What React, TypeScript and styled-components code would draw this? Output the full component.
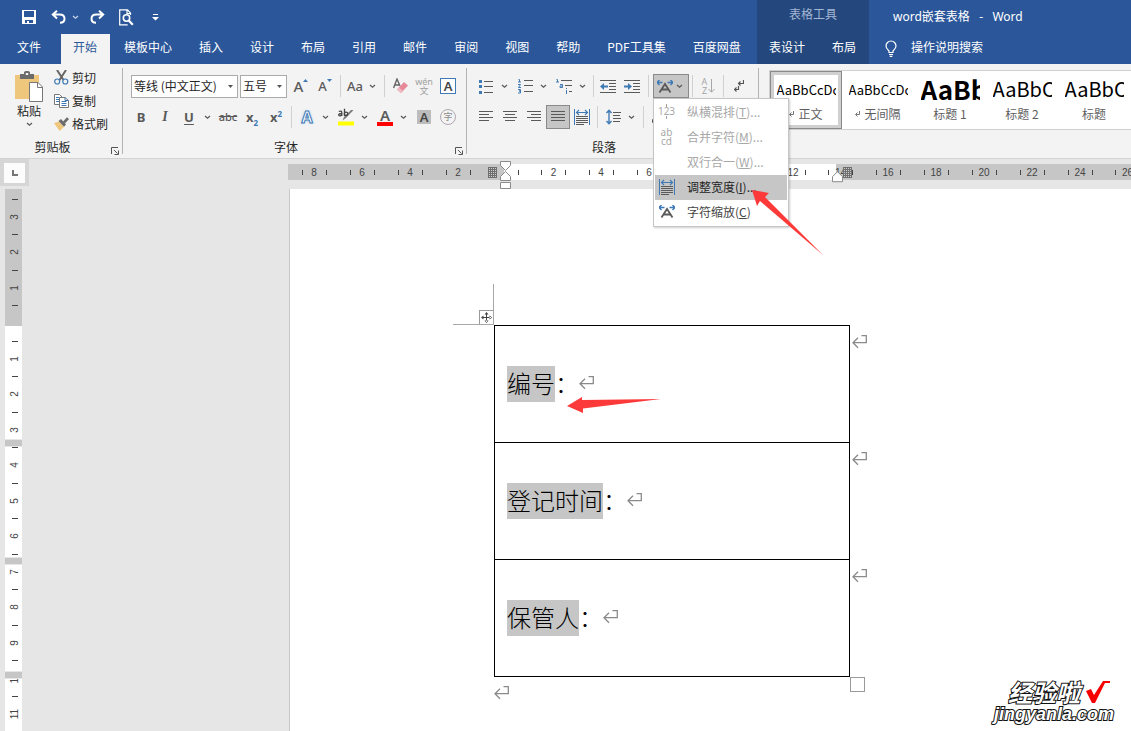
import React from "react";
import styled, { createGlobalStyle, css } from "styled-components";

const ui = `"Noto Sans", "Noto Sans CJK SC", sans-serif`;
const cjk = `"Noto Sans CJK SC", "Noto Sans", sans-serif`;
const blue = "#2b579a";
const accent = "#3f7ab5";
const ink = "#5a5a5a";

const GlobalStyle = createGlobalStyle`
  *, *::before, *::after { box-sizing: border-box; }
  body { margin: 0; font-family: ${cjk}; font-size: 12px; line-height: 16px; color: #262626; }
  button, select { font: inherit; color: inherit; margin: 0; padding: 0; border: 0; background: none; }
  ul { list-style: none; margin: 0; padding: 0; }
  svg { display: block; flex: none; }
`;

const Shell = styled.div`
  position: relative;
  display: flex;
  flex-direction: column;
  height: 100vh;
  overflow: hidden;
  background: #e6e6e6;
`;

/* ---------- title bar and tabs ---------- */

const Header = styled.header`
  display: flex;
  flex: none;
  background: ${blue};
  color: #fff;
`;

const HeaderColumn = styled.div<{ $context?: boolean; $grow?: boolean }>`
  display: flex;
  flex-direction: column;
  flex: ${(p) => (p.$grow ? "1" : "none")};
  min-width: ${(p) => (p.$grow || p.$context ? "0" : "757px")};
  background: ${(p) => (p.$context ? "#24477d" : "transparent")};
`;

const QuickAccess = styled.div`
  display: flex;
  align-items: center;
  gap: 5px;
  height: 34px;
  padding-left: 17px;
`;

const QuickButton = styled.button`
  display: flex;
  align-items: center;
  justify-content: center;
  width: 24px;
  height: 24px;
`;

const QuickSplit = styled.div`
  display: flex;
  align-items: center;
`;

const TinyButton = styled.button`
  display: flex;
  align-items: center;
  justify-content: center;
  width: 10px;
  height: 24px;
`;

const ContextTitle = styled.div`
  height: 34px;
  line-height: 28px;
  text-align: center;
  color: #a3b6d3;
`;

const DocumentTitle = styled.div`
  height: 34px;
  padding-left: 24px;
  line-height: 34px;
  font-family: ${ui};
  white-space: pre;
`;

const Tabs = styled.nav`
  display: flex;
  gap: 2px;
  height: 30px;
`;

const Tab = styled.button<{ $active?: boolean; $file?: boolean }>`
  padding: ${(p) => (p.$file ? "0 18px 0 17px" : "0 13px 0 12px")};
  height: 30px;
  padding-bottom: 4px;
  line-height: 26px;
  white-space: nowrap;
  ${(p) => p.$active && css`background: #f3f3f3; color: ${blue};`}
`;

const TellMe = styled.button`
  display: flex;
  align-items: center;
  gap: 14px;
  height: 28px;
  padding-left: 16px;
  line-height: 28px;
  span { padding-bottom: 2px; line-height: 26px; }
`;

/* ---------- ribbon ---------- */

const Ribbon = styled.section`
  position: relative;
  z-index: 2;
  display: flex;
  flex: none;
  height: 95px;
  background: #f3f3f3;
  border-bottom: 1px solid #d2d2d2;
`;

const Group = styled.div<{ $width: number }>`
  display: flex;
  flex-direction: column;
  flex: none;
  width: ${(p) => p.$width}px;
`;

const GroupDivider = styled.div`
  flex: none;
  width: 1px;
  margin: 4px 0;
  background: #b4b4b4;
`;

const GroupRows = styled.div<{ $left: number }>`
  display: flex;
  flex-direction: column;
  flex: 1;
  gap: 7px;
  padding: 10px 0 0 ${(p) => p.$left}px;
`;

const Row = styled.div<{ $indent?: number }>`
  display: flex;
  align-items: center;
  height: 24px;
  padding-left: ${(p) => p.$indent ?? 0}px;
`;

const GroupFooter = styled.div`
  display: flex;
  align-items: center;
  height: 21px;
  span { flex: 1; padding-bottom: 2px; text-align: center; }
`;

const Launcher = styled.button`
  display: flex;
  align-items: flex-end;
  width: 17px;
  height: 14px;
  padding-left: 6px;
`;

const ClipboardBody = styled.div`
  display: flex;
  flex: 1;
  gap: 8px;
  padding: 3px 0 0 12px;
`;

const PasteButton = styled.button`
  display: flex;
  flex-direction: column;
  align-items: center;
  width: 34px;
  height: 69px;
  padding-top: 4px;
  gap: 2px;
  span { line-height: 14px; padding-bottom: 2px; }
`;

const CommandList = styled.div`
  display: flex;
  flex-direction: column;
`;

const Command = styled.button`
  display: flex;
  align-items: center;
  gap: 3px;
  height: 23px;
  padding-bottom: 2px;
  white-space: nowrap;
`;

const Combo = styled.span<{ $width: number }>`
  position: relative;
  display: block;
  width: ${(p) => p.$width}px;
  height: 23px;
  margin-right: 2px;
  select {
    width: 100%;
    height: 23px;
    padding: 0 0 0 2px;
    border: 1px solid #ababab;
    border-radius: 0;
    background: #fff;
    appearance: none;
    line-height: 16px;
  }
  svg { position: absolute; right: 5px; top: 10px; pointer-events: none; }
`;

const Tool = styled.button<{ $w?: number; $pressed?: boolean; $caret?: boolean }>`
  display: flex;
  align-items: center;
  justify-content: center;
  flex: none;
  width: ${(p) => p.$w ?? 24}px;
  height: 24px;
  padding-right: ${(p) => (p.$caret ? 3 : 0)}px;
  font-family: ${ui};
  color: ${ink};
  ${(p) => p.$pressed && css`background: #c6c6c6; box-shadow: inset 0 0 0 1px #8a8a8a;`}
`;

const PressedCaret = styled.span`
  display: flex;
  justify-content: center;
  width: 13px;
`;

const Sep = styled.i<{ $w?: number }>`
  display: flex;
  justify-content: center;
  width: ${(p) => p.$w ?? 7}px;
  height: 22px;
  &::after { content: ""; width: 1px; background: #d0d0d0; }
`;

const Letter = styled.span<{ $size?: number; $bold?: boolean; $italic?: boolean; $under?: boolean; $strike?: boolean; $serif?: boolean }>`
  font-size: ${(p) => p.$size ?? 13}px;
  line-height: 16px;
  font-family: ${(p) => (p.$serif ? `"Liberation Serif", serif` : ui)};
  font-weight: ${(p) => (p.$bold ? 700 : 500)};
  font-style: ${(p) => (p.$italic ? "italic" : "normal")};
  text-decoration: ${(p) => (p.$under ? "underline" : p.$strike ? "line-through" : "none")};
  text-underline-offset: 2px;
  sub, sup { font-size: 8px; line-height: 0; color: ${accent}; }
`;

const GrowLetter = styled.span<{ $size: number }>`
  display: flex;
  align-items: flex-start;
  font-size: ${(p) => p.$size}px;
  font-weight: 500;
  line-height: 18px;
  svg { margin-top: 2px; }
`;

const ColorLetter = styled.span<{ $bar: string }>`
  display: flex;
  justify-content: center;
  width: 16px;
  height: 18px;
  border-bottom: 4px solid ${(p) => p.$bar};
  font-size: 15px;
  font-weight: 600;
  line-height: 15px;
`;

const OutlineLetter = styled.span`
  font-size: 16px;
  font-weight: 700;
  line-height: 18px;
  color: #fff;
  -webkit-text-stroke: 1px ${accent};
  text-shadow: 0 0 3px #8fb8e0;
`;

const BoxLetter = styled.span<{ $filled?: boolean }>`
  width: ${(p) => (p.$filled ? 14 : 16)}px;
  height: ${(p) => (p.$filled ? 14 : 16)}px;
  border: ${(p) => (p.$filled ? "0" : `1px solid ${accent}`)};
  background: ${(p) => (p.$filled ? "#bcbcbc" : "#fff")};
  color: #444;
  font-size: 13px;
  font-weight: 600;
  line-height: 14px;
  text-align: center;
`;

const CircleLetter = styled.span`
  width: 16px;
  height: 16px;
  border: 1px solid #b0a8b0;
  border-radius: 50%;
  color: #8c8c8c;
  font-size: 9px;
  line-height: 14px;
  text-align: center;
`;

const Phonetic = styled.span`
  display: flex;
  flex-direction: column;
  align-items: center;
  font-size: 9px;
  line-height: 9px;
  color: #a0a0a0;
`;

const SortLetters = styled.span`
  display: flex;
  align-items: center;
  color: #a6a6a6;
  font-size: 9px;
  line-height: 9px;
  span { width: 7px; }
`;

/* ---------- layout menu ---------- */

const MenuAnchor = styled.div`
  position: relative;
  height: 24px;
`;

const Menu = styled.ul`
  position: absolute;
  z-index: 5;
  top: 24px;
  left: 0;
  width: 136px;
  padding: 1px;
  border: 1px solid #c6c6c6;
  background: #fff;
  box-shadow: 1px 1px 2px rgba(0, 0, 0, 0.2);
`;

const MenuItem = styled.button<{ $on?: boolean }>`
  display: flex;
  align-items: center;
  gap: 12px;
  width: 100%;
  height: 25px;
  padding: 0 0 2px 3px;
  text-align: left;
  white-space: nowrap;
  background: ${(p) => (p.$on ? "#c6c6c6" : "transparent")};
  color: ${(p) => (p.disabled ? "#a8a8a8" : p.$on ? "#1e1e1e" : "#444")};
`;

const MenuIcon = styled.span`
  display: flex;
  flex-direction: column;
  align-items: center;
  justify-content: center;
  flex: none;
  width: 17px;
  font-family: ${ui};
  font-size: 10px;
  line-height: 9px;
  text-align: center;
`;

const MenuArrow = styled.svg`
  position: absolute;
  z-index: 6;
  left: 98px;
  top: 115px;
  pointer-events: none;
`;

/* ---------- styles gallery ---------- */

const Gallery = styled.div`
  display: flex;
  flex: 1;
  min-width: 0;
  height: 60px;
  margin: 6px 0 0 10px;
  border: 1px solid #d0d0d0;
  border-width: 1px 0 1px 1px;
  background: #fff;
  overflow: hidden;
`;

const StyleCard = styled.button<{ $on?: boolean }>`
  display: flex;
  flex-direction: column;
  align-items: center;
  flex: none;
  width: 72px;
  height: 58px;
  ${(p) => p.$on && css`box-shadow: inset 0 0 0 1px #8a8a8a, inset 0 0 0 4px #d0d0d0;`}
`;

const Sample = styled.span<{ $size: number; $bold?: boolean }>`
  width: 59px;
  height: 34px;
  overflow: hidden;
  white-space: nowrap;
  text-align: left;
  font-size: ${(p) => p.$size}px;
  font-weight: ${(p) => (p.$bold ? 700 : 400)};
  line-height: ${(p) => (p.$size > 14 ? 36 : 38)}px;
  color: #000;
`;

const StyleName = styled.span`
  display: flex;
  align-items: center;
  gap: 4px;
  line-height: 18px;
  color: #5f5f5f;
`;

/* ---------- rulers ---------- */

const RulerRow = styled.div`
  display: flex;
  flex: none;
  height: 30px;
`;

const Corner = styled.div`
  flex: none;
  width: 29px;
  height: 27px;
  padding: 4px;
  background: #d6d6d6;
`;

const TabStop = styled.button`
  display: flex;
  align-items: center;
  justify-content: center;
  width: 21px;
  height: 20px;
  background: #fcfcfc;
`;

const HorizontalRuler = styled.div`
  position: relative;
  flex: 1;
  min-width: 0;
  height: 16px;
  margin: 5px 0 0 259px;
  background: linear-gradient(to right, #c6c6c6 216px, #fff 216px, #fff 548px, #c6c6c6 548px);
`;

const HorizontalScale = styled.ul`
  display: flex;
  height: 17px;
  padding-left: 2px;
  overflow: hidden;
`;

const HorizontalCell = styled.li<{ $origin?: boolean }>`
  display: flex;
  align-items: center;
  justify-content: center;
  flex: none;
  width: 48px;
  font: 10px/18px "Liberation Sans", sans-serif;
  color: #444;
  &:nth-child(6n) { width: 47px; }
  span { width: 23px; text-align: center; }
  &::before, &::after { content: ""; width: 1px; height: 5px; background: #444; }
  ${(p) => p.$origin && css`&::before { background: transparent; }`}
`;

const ColumnMark = styled.svg<{ $x: number }>`
  position: absolute;
  left: ${(p) => p.$x}px;
  top: 3px;
`;

const Indent = styled.svg<{ $x: number; $y: number }>`
  position: absolute;
  left: ${(p) => p.$x}px;
  top: ${(p) => p.$y}px;
`;

const Workspace = styled.main`
  display: flex;
  flex: 1;
  min-height: 0;
`;

const VerticalRuler = styled.ul`
  position: relative;
  flex: none;
  width: 17px;
  margin-left: 5px;
  padding-top: 10px;
  overflow: hidden;
  background: linear-gradient(to bottom, #c6c6c6 137px, #fff 137px);
`;

const VerticalCell = styled.li`
  display: flex;
  flex-direction: column;
  align-items: center;
  height: 35px;
  padding-left: 2px;
  font: 10px/34px "Liberation Sans", sans-serif;
  color: #444;
  &:nth-child(even) { height: 36px; }
  &::before { content: ""; flex: none; width: 6px; height: 1px; background: #444; }
  span { flex: none; width: 36px; height: 34px; text-align: center; transform: rotate(-90deg); }
`;

const RowBand = styled.li<{ $y: number }>`
  position: absolute;
  left: 0;
  right: 0;
  top: ${(p) => p.$y}px;
  height: 8px;
  border: 1px solid #e6e6e6;
  border-width: 1px 0;
  background: #c6c6c6;
`;

/* ---------- page ---------- */

const Page = styled.article`
  flex: 1;
  min-width: 0;
  margin-left: 267px;
  padding: 136px 0 0 204px;
  border-left: 1px solid #c8c8c8;
  background: #fff;
  overflow: hidden;
`;

const TableArea = styled.div`
  position: relative;
  display: flex;
  gap: 2px;
`;

const FormTable = styled.table`
  width: 356px;
  border-collapse: collapse;
  td {
    height: 117px;
    padding: 0 12px;
    border: 1px solid #000;
    font-size: 24px;
    font-weight: 300;
    line-height: 34px;
    color: #000;
  }
`;

const CellLine = styled.div`
  display: flex;
  align-items: center;
  height: 36px;
  svg { margin-bottom: 3px; }
`;

const Selected = styled.mark`
  height: 36px;
  background: #c6c6c6;
  color: inherit;
`;

const Colon = styled.span`
  width: 24px;
  height: 36px;
`;

const RowEnds = styled.div`
  display: flex;
  flex-direction: column;
  svg { margin: 10px 0 93px; }
`;

const AfterTable = styled.div`
  display: flex;
  justify-content: space-between;
  align-items: flex-start;
  width: 371px;
  svg { margin-top: 9px; }
`;

const ResizeHandle = styled.span`
  width: 15px;
  height: 15px;
  border: 1px solid #9a9a9a;
`;

const MarginGuides = styled.span`
  position: absolute;
  left: -41px;
  top: -41px;
  width: 41px;
  height: 41px;
  border: 1px solid #a8a8a8;
  border-width: 0 1px 1px 0;
  display: flex;
  align-items: flex-end;
  justify-content: flex-end;
`;

const MoveHandle = styled.span`
  width: 14px;
  height: 14px;
  border: 1px solid #9a9a9a;
  border-width: 1px 0 0 1px;
`;

const CellArrow = styled.svg`
  position: absolute;
  left: 72px;
  top: 71px;
`;

/* ---------- watermark ---------- */

const Watermark = styled.div`
  position: absolute;
  right: 17px;
  bottom: 7px;
  display: flex;
  flex-direction: column;
  align-items: flex-end;
  color: #fff;
  font-style: italic;
  font-weight: 700;
  -webkit-text-stroke: 2px #111;
  paint-order: stroke fill;
`;

const WatermarkTop = styled.div`
  display: flex;
  align-items: center;
  gap: 6px;
  padding-right: 4px;
  font-size: 24px;
  line-height: 24px;
`;

const WatermarkUrl = styled.div`
  font-family: "Liberation Sans", sans-serif;
  font-size: 18px;
  line-height: 20px;
`;

/* ---------- drawings ---------- */

const Caret = ({ color = ink }: { color?: string }) => (
  <svg width="7" height="5" viewBox="0 0 7 5"><path d="M1 1l2.5 2.2L6 1" fill="none" stroke={color} strokeWidth="1.3" /></svg>
);

const DropArrow = () => (
  <svg width="5" height="3" viewBox="0 0 5 3"><path d="M0 0h5L2.5 3z" fill="#555" /></svg>
);

const SaveIcon = () => (
  <svg width="14" height="14" viewBox="0 0 14 14">
    <path fillRule="evenodd" fill="#fff" d="M0 0h14v14H0zM2 1v6h10V1zM3 10v3h2v-2h2v2h4v-3z" />
  </svg>
);

const UndoIcon = ({ flip }: { flip?: boolean }) => (
  <svg width="15" height="14" viewBox="0 0 15 14">
    <g fill="none" stroke="#fff" strokeWidth="2" transform={flip ? "translate(15 0) scale(-1 1)" : undefined}>
      <path d="M6 .8L1.8 4.6 6 8.4M2 4.6h6.5c3.4 0 5 1.8 5 4.2 0 2.200-1.600 4-4.500 4" />
    </g>
  </svg>
);

const PreviewIcon = () => (
  <svg width="15" height="17" viewBox="0 0 15 17" fill="none" stroke="#fff">
    <path d="M11.500 6V4L8.500.8H.7v15h8M8 .8v3.700h3.500" strokeWidth="1.200" />
    <circle cx="7.500" cy="9" r="3.200" strokeWidth="1.600" />
    <path d="M9.800 11.500l4 4.200" strokeWidth="2.200" />
  </svg>
);

const CustomizeIcon = () => (
  <svg width="7" height="7" viewBox="0 0 7 7" fill="#fff"><path d="M1 0h5v1H1zM0 3h7L3.500 6.500z" /></svg>
);

const BulbIcon = () => (
  <svg width="12" height="17" viewBox="0 0 12 17" fill="none" stroke="#fff" strokeWidth="1.200">
    <path d="M4 12.500V11C2.500 9.500 1 8.300 1 6a5 5 0 0 1 10 0c0 2.300-1.500 3.500-3 5v1.500zM4 14.500h4M4.700 16.300h2.600" />
  </svg>
);

const PasteIcon = () => (
  <svg width="28" height="31" viewBox="0 0 28 31">
    <path d="M0 4h24v24H0z" fill="#eec77c" />
    <path d="M5 3h4V1.500C9 .5 10 0 12 0s3 .5 3 1.500V3h4v5H5z" fill="#6b6b6b" />
    <path d="M10.800 2h2.400v2h-2.400z" fill="#f3f3f3" />
    <path d="M14.500 11.500h8.500l4.500 4.500v14.500h-13z" fill="#fff" stroke="#777" />
    <path d="M22.500 11.500V16.500h5" fill="none" stroke="#777" />
  </svg>
);

const CutIcon = () => (
  <svg width="15" height="15" viewBox="0 0 15 15" fill="none">
    <path d="M3 0l6.500 10M12 0L5.500 10" stroke="#666" strokeWidth="2" />
    <circle cx="3.200" cy="11.500" r="2.500" stroke={accent} strokeWidth="1.200" />
    <circle cx="11.300" cy="11.500" r="2.500" stroke={accent} strokeWidth="1.200" />
  </svg>
);

const CopyIcon = () => (
  <svg width="15" height="14" viewBox="0 0 15 14">
    <path d="M.5.500h5l2.500 2.500v7.500H.5z" fill="#fff" stroke="#777" />
    <path d="M2 3.500h3M2 5.500h3M2 7.500h3" stroke={accent} />
    <path d="M5.500 3.500h5.500l3.500 3v7h-9z" fill="#fff" stroke="#777" />
    <path d="M11 3.500v3h3.500M7.500 7.500h5M7.500 9.500h5M7.500 11.500h5" fill="none" stroke={accent} />
  </svg>
);

const BrushIcon = () => (
  <svg width="15" height="14" viewBox="0 0 15 14">
    <path d="M0 6l5-1.500 5 5.500-4.500 4z" fill="#eec77c" />
    <path d="M4.500 4L7 2l5 5.500-2 2.200z" fill="#6b6b6b" />
    <path d="M9 4.500l4-4.200L15 2l-4 4.500z" fill="#6b6b6b" />
  </svg>
);

const LauncherIcon = () => (
  <svg width="8" height="8" viewBox="0 0 8 8" fill="none" stroke="#555">
    <path d="M.5 7V.500H7M3 3l3.500 3.500M7.500 3.500v4h-4" />
  </svg>
);

const EraserIcon = () => (
  <svg width="15" height="16" viewBox="0 0 15 16">
    <path d="M.600 10L4 1l3 7M2 7h4" fill="none" stroke="#666" strokeWidth="1.400" />
    <path d="M4 11.500L11 4l4 3.500-7 7.500z" fill="#e8899a" />
    <path d="M4 11.500l2-2 4 3.500-2 2.200z" fill="#f3b9c3" />
  </svg>
);

const HighlightIcon = () => (
  <svg width="16" height="18" viewBox="0 0 16 18">
    <path d="M0 13.500h16v4H0z" fill="#ffff00" />
    <path d="M15.500 2L8 10l-3.500 2.500L6 9l7-7z" fill="#7a7a7a" />
    <g fill="none" stroke="#444" strokeWidth="1.300"><path d="M.800 3.500c2-.8 3-.3 3 1V8M3.800 5.500C1.500 5.500.700 6 .700 7s2 1.200 3 0M6.500.800V8" /><circle cx="8" cy="5.800" r="1.700" /></g>
  </svg>
);

const Lines = ({ widths, shift = "start" }: { widths: number[]; shift?: "start" | "center" | "end" }) => (
  <svg width="14" height="12" viewBox="0 0 14 12" fill={ink} shapeRendering="crispEdges">
    {widths.map((w, i) => (
      <rect key={i} x={shift === "start" ? 0 : shift === "center" ? (14 - w) / 2 : 14 - w} y={i * 3} width={w} height="1" />
    ))}
  </svg>
);

const BulletsIcon = () => (
  <svg width="14" height="15" viewBox="0 0 14 15">
    <path d="M5 2h9v1H5zM5 7h9v1H5zM5 13h9v1H5z" fill={ink} />
    <path d="M0 1h3v3H0zM0 6h3v3H0zM0 12h3v3H0z" fill={accent} />
  </svg>
);

const NumberingIcon = () => (
  <svg width="15" height="16" viewBox="0 0 15 16">
    <path d="M6 2h9v1H6zM6 7h9v1H6zM6 13h9v1H6z" fill={ink} />
    <path d="M.5 1.500h1V4M0 4h3M0 6.500h2.500L.500 9.500H3M0 11.500h2.500v1.500H1v0h1.500v2H0" fill="none" stroke={accent} />
  </svg>
);

const MultilevelIcon = () => (
  <svg width="17" height="16" viewBox="0 0 17 16">
    <path d="M5 2h11v1H5zM9 7h7v1H9zM13 13h3v1h-3z" fill={ink} />
    <path d="M.5 1.500h1V4M0 4h3M4 6.500h2.500v3H4V8h2.500M10.500 10v1M10.500 12v4" fill="none" stroke={accent} />
  </svg>
);

const DentIcon = ({ right }: { right?: boolean }) => (
  <svg width="16" height="13" viewBox="0 0 16 13">
    <path d="M0 0h16v1H0zM9 3h7v1H9zM9 6h7v1H9zM9 9h7v1H9zM0 12h16v1H0z" fill={ink} />
    <g transform={right ? "translate(8 0) scale(-1 1)" : undefined}>
      <path d="M0 6.500L4 3v2.500h4v2H4V10z" fill={accent} />
    </g>
  </svg>
);

const DistributeIcon = () => (
  <svg width="16" height="16" viewBox="0 0 16 16" fill="none">
    <path d="M.5 0v16M15.500 0v16" stroke={accent} />
    <path d="M2.500 3.500h11M5 1L2.500 3.500 5 6M11 1l2.500 2.500L11 6" stroke={accent} strokeWidth="1.200" />
    <path d="M2 7.500h12M2 9.500h12M2 11.500h12M2 13.500h12M2 15.500h8" stroke={ink} />
  </svg>
);

const SpacingIcon = () => (
  <svg width="15" height="16" viewBox="0 0 15 16" fill="none">
    <path d="M3 1v14M.5 4L3 1.200 5.500 4M.5 12L3 14.800 5.500 12" stroke={accent} strokeWidth="1.400" />
    <path d="M7 3.500h8M7 6.500h7M7 9.500h8M7 12.500h7" stroke={ink} />
  </svg>
);

const ShadingIcon = () => (
  <svg width="14" height="14" viewBox="0 0 14 14" fill="none" stroke={ink}><path d="M.5 9.500h3v3h-3zM3 8V5h3" /></svg>
);

const ScaleIcon = () => (
  <svg width="16" height="13" viewBox="0 0 16 13" fill="none">
    <path d="M0 2.500h5.500M2.500 0L0 2.500 2.500 5M10.500 2.500H16M13.500 0L16 2.500 13.500 5" stroke={accent} strokeWidth="1.500" />
    <path d="M2.500 12.500L8 4l5.500 8.500M5 9.500h6" stroke={ink} strokeWidth="1.800" />
  </svg>
);

const DownArrowIcon = () => (
  <svg width="7" height="14" viewBox="0 0 7 14" fill="none" stroke="#a6a6a6"><path d="M3.500 0v13M.5 10l3 3.200 3-3.200" /></svg>
);

const MarksIcon = () => (
  <svg width="10" height="12" viewBox="0 0 10 12" fill="none" stroke="#555" strokeWidth="1.200">
    <path d="M9.500 0v3.500H4.500M6.500 1.500l-2 2 2 2M4.500 6v3.500H0M2.500 7.500L.500 9.500l2 2" />
  </svg>
);

const CenterTick = () => (
  <svg width="3" height="3" viewBox="0 0 3 3"><path d="M1 0h1v3H1z" fill="#a0a0a0" /></svg>
);

const GridMark = ({ x }: { x: number }) => (
  <ColumnMark $x={x} width="9" height="11" viewBox="0 0 9 11" shapeRendering="crispEdges">
    <path d="M0 0h9v11H0z" fill="#d0d0d0" />
    <path d="M.5 0v11M2.500 0v11M4.500 0v11M6.500 0v11M8.500 0v11M0 .500h9M0 2.500h9M0 4.500h9M0 6.500h9M0 8.500h9M0 10.500h9" stroke="#6e6e6e" />
  </ColumnMark>
);

const ReturnMark = () => (
  <svg width="15" height="14" viewBox="0 0 15 14" fill="none" stroke="#8a8a8a" strokeWidth="1.300">
    <path d="M9.500.700h4.800v7H1.200M6 2.700L1 7.700l5 5" />
  </svg>
);

const SmallReturn = () => (
  <svg width="5" height="6" viewBox="0 0 5 6" fill="none" stroke="#777"><path d="M4.500 0v3.500H1M2.500 1.500l-2 2 2 2" /></svg>
);

const MoveIcon = () => (
  <svg width="13" height="13" viewBox="0 0 13 13" fill="#444">
    <path d="M6 2h1v9H6zM2 6h9v1H2zM6.500 1L8.500 3.500h-4zM6.500 12l2-2.500h-4zM1 6.500l2.500-2v4zM12 6.500l-2.500-2v4z" />
  </svg>
);

/* ---------- data ---------- */

const mainTabs = ["模板中心", "插入", "设计", "布局", "引用", "邮件", "审阅", "视图", "帮助", "PDF工具集", "百度网盘"];
const horizontalMarks = ["8", "6", "4", "2", "", "2", "4", "6", "8", "10", "12", "14", "16", "18", "20", "22", "24", "26"];
const verticalMarks = ["3", "2", "1", "", "1", "2", "3", "4", "5", "6", "7", "8", "9", "10", "11"];
const styleCards = [
  { name: "正文", sample: "AaBbCcDc", size: 13, mark: true },
  { name: "无间隔", sample: "AaBbCcDc", size: 13, mark: true },
  { name: "标题 1", sample: "AaBb", size: 26, bold: true },
  { name: "标题 2", sample: "AaBbC", size: 20 },
  { name: "标题", sample: "AaBbC", size: 20 },
];
const fields = ["编号", "登记时间", "保管人"];

const CaretTool = ({ label }: { label: string }) => (
  <Tool $w={15} $caret aria-label={label}><Caret /></Tool>
);

function ClipboardGroup() {
  return (
    <Group $width={122}>
      <ClipboardBody>
        <PasteButton><PasteIcon /><span>粘贴</span><Caret /></PasteButton>
        <CommandList>
          <Command><CutIcon />剪切</Command>
          <Command><CopyIcon />复制</Command>
          <Command><BrushIcon />格式刷</Command>
        </CommandList>
      </ClipboardBody>
      <GroupFooter><span>剪贴板</span><Launcher aria-label="剪贴板设置"><LauncherIcon /></Launcher></GroupFooter>
    </Group>
  );
}

function FontGroup() {
  return (
    <Group $width={343}>
      <GroupRows $left={6}>
        <Row $indent={2}>
          <Combo $width={107}>
            <select aria-label="字体"><option>等线 (中文正文)</option></select>
            <DropArrow />
          </Combo>
          <Combo $width={47}>
            <select aria-label="字号"><option>五号</option></select>
            <DropArrow />
          </Combo>
          <Tool aria-label="增大字号"><GrowLetter $size={15}>A<svg width="5" height="3" viewBox="0 0 5 3"><path d="M0 3h5L2.500 0z" fill={accent} /></svg></GrowLetter></Tool>
          <Tool aria-label="减小字号"><GrowLetter $size={13}>A<svg width="5" height="3" viewBox="0 0 5 3"><path d="M0 0h5L2.500 3z" fill={accent} /></svg></GrowLetter></Tool>
          <Sep />
          <Tool $w={22} aria-label="更改大小写"><Letter>Aa</Letter></Tool>
          <CaretTool label="大小写选项" />
          <Sep />
          <Tool aria-label="清除格式"><EraserIcon /></Tool>
          <Tool aria-label="拼音指南"><Phonetic><span>wén</span><span>文</span></Phonetic></Tool>
          <Tool aria-label="字符边框"><BoxLetter>A</BoxLetter></Tool>
        </Row>
        <Row>
          <Tool aria-label="加粗"><Letter $bold>B</Letter></Tool>
          <Tool aria-label="倾斜"><Letter $italic $serif $bold $size={14}>I</Letter></Tool>
          <Tool aria-label="下划线"><Letter $under $bold>U</Letter></Tool>
          <CaretTool label="下划线选项" />
          <Tool aria-label="删除线"><Letter $strike $size={11}>abc</Letter></Tool>
          <Tool aria-label="下标"><Letter $bold>x<sub>2</sub></Letter></Tool>
          <Tool aria-label="上标"><Letter $bold>x<sup>2</sup></Letter></Tool>
          <Sep />
          <Tool aria-label="文本效果"><OutlineLetter>A</OutlineLetter></Tool>
          <CaretTool label="文本效果选项" />
          <Tool aria-label="突出显示"><HighlightIcon /></Tool>
          <CaretTool label="突出显示颜色" />
          <Tool aria-label="字体颜色"><ColorLetter $bar="#ff0000">A</ColorLetter></Tool>
          <CaretTool label="字体颜色选项" />
          <Tool aria-label="字符底纹"><BoxLetter $filled>A</BoxLetter></Tool>
          <Tool aria-label="带圈字符"><CircleLetter>字</CircleLetter></Tool>
        </Row>
      </GroupRows>
      <GroupFooter><span>字体</span><Launcher aria-label="字体设置"><LauncherIcon /></Launcher></GroupFooter>
    </Group>
  );
}

function LayoutMenu() {
  return (
    <MenuAnchor>
      <Tool $w={36} $pressed aria-label="中文版式"><ScaleIcon /><PressedCaret><Caret /></PressedCaret></Tool>
      <Menu>
        <li><MenuItem disabled><MenuIcon><CenterTick />123<CenterTick /></MenuIcon><span>纵横混排(<u>T</u>)...</span></MenuItem></li>
        <li><MenuItem disabled><MenuIcon><span>ab</span><span>cd</span></MenuIcon><span>合并字符(<u>M</u>)...</span></MenuItem></li>
        <li><MenuItem disabled><MenuIcon /><span>双行合一(<u>W</u>)...</span></MenuItem></li>
        <li><MenuItem $on><MenuIcon><DistributeIcon /></MenuIcon><span>调整宽度(<u>I</u>)...</span></MenuItem></li>
        <li><MenuItem><MenuIcon><ScaleIcon /></MenuIcon><span>字符缩放(<u>C</u>)</span></MenuItem></li>
      </Menu>
      <MenuArrow width="74" height="68" viewBox="0 0 74 68">
        <path d="M1 1l17 3-4 4 58 58L9 12l-3 5z" fill="#fd3a3a" />
      </MenuArrow>
    </MenuAnchor>
  );
}

function ParagraphGroup() {
  return (
    <Group $width={291}>
      <GroupRows $left={7}>
        <Row>
          <Tool aria-label="项目符号"><BulletsIcon /></Tool>
          <CaretTool label="项目符号选项" />
          <Tool aria-label="编号"><NumberingIcon /></Tool>
          <CaretTool label="编号选项" />
          <Tool aria-label="多级列表"><MultilevelIcon /></Tool>
          <CaretTool label="多级列表选项" />
          <Sep $w={5} />
          <Tool aria-label="减少缩进量"><DentIcon /></Tool>
          <Tool aria-label="增加缩进量"><DentIcon right /></Tool>
          <Sep $w={9} />
          <LayoutMenu />
          <Sep />
          <Tool aria-label="排序"><SortLetters><span>A<br />Z</span><DownArrowIcon /></SortLetters></Tool>
          <Sep />
          <Tool aria-label="显示编辑标记"><MarksIcon /></Tool>
        </Row>
        <Row>
          <Tool aria-label="左对齐"><Lines widths={[14, 10, 14, 10]} /></Tool>
          <Tool aria-label="居中"><Lines widths={[14, 10, 14, 10]} shift="center" /></Tool>
          <Tool aria-label="右对齐"><Lines widths={[14, 10, 14, 10]} shift="end" /></Tool>
          <Tool $pressed aria-label="两端对齐"><Lines widths={[14, 14, 14, 14]} /></Tool>
          <Tool aria-label="分散对齐"><DistributeIcon /></Tool>
          <Sep />
          <Tool aria-label="行距"><SpacingIcon /></Tool>
          <CaretTool label="行距选项" />
          <Sep />
          <Tool aria-label="底纹"><ShadingIcon /></Tool>
        </Row>
      </GroupRows>
      <GroupFooter><span>段落</span><Launcher aria-label="段落设置"><LauncherIcon /></Launcher></GroupFooter>
    </Group>
  );
}

export default function App() {
  return (
    <Shell>
      <GlobalStyle />
      <Header>
        <HeaderColumn>
          <QuickAccess>
            <QuickButton aria-label="保存"><SaveIcon /></QuickButton>
            <QuickSplit>
              <QuickButton aria-label="撤消"><UndoIcon /></QuickButton>
              <TinyButton aria-label="撤消列表"><Caret color="#c5d2e6" /></TinyButton>
            </QuickSplit>
            <QuickButton aria-label="重做"><UndoIcon flip /></QuickButton>
            <QuickButton aria-label="打印预览"><PreviewIcon /></QuickButton>
            <QuickButton aria-label="自定义快速访问工具栏"><CustomizeIcon /></QuickButton>
          </QuickAccess>
          <Tabs>
            <Tab $file>文件</Tab>
            <Tab $active>开始</Tab>
            {mainTabs.map((t) => <Tab key={t}>{t}</Tab>)}
          </Tabs>
        </HeaderColumn>
        <HeaderColumn $context>
          <ContextTitle>表格工具</ContextTitle>
          <Tabs><Tab>表设计</Tab><Tab>布局</Tab></Tabs>
        </HeaderColumn>
        <HeaderColumn $grow>
          <DocumentTitle>{"word嵌套表格   -   Word"}</DocumentTitle>
          <TellMe><BulbIcon /><span>操作说明搜索</span></TellMe>
        </HeaderColumn>
      </Header>

      <Ribbon>
        <ClipboardGroup />
        <GroupDivider />
        <FontGroup />
        <GroupDivider />
        <ParagraphGroup />
        <GroupDivider />
        <Gallery>
          {styleCards.map((s, i) => (
            <StyleCard key={s.name} $on={i === 0}>
              <Sample $size={s.size} $bold={s.bold}>{s.sample}</Sample>
              <StyleName>{s.mark && <SmallReturn />}{s.name}</StyleName>
            </StyleCard>
          ))}
        </Gallery>
      </Ribbon>

      <RulerRow>
        <Corner>
          <TabStop aria-label="制表符">
            <svg width="6" height="6" viewBox="0 0 6 6"><path d="M0 0h2v4h4v2H0z" fill="#777" /></svg>
          </TabStop>
        </Corner>
        <HorizontalRuler>
          <HorizontalScale>
            {horizontalMarks.map((m, i) => (
              <HorizontalCell key={i} $origin={m === ""}><span>{m}</span></HorizontalCell>
            ))}
          </HorizontalScale>
          <GridMark x={200} />
          <GridMark x={555} />
          <Indent $x={212} $y={-3} width="11" height="28" viewBox="0 0 11 28">
            <path d="M.5.500h10v4L5.500 9.500l-5-5zM5.500 10.500l5 5v4H.500v-4zM.500 21.500h10v6H.500z" fill="#fff" stroke="#8a8a8a" />
          </Indent>
          <Indent $x={544} $y={7} width="11" height="12" viewBox="0 0 11 12">
            <path d="M5.500.700l5 5v5H.500v-5z" fill="#fff" stroke="#8a8a8a" />
          </Indent>
        </HorizontalRuler>
      </RulerRow>

      <Workspace>
        <VerticalRuler>
          {verticalMarks.map((m, i) => <VerticalCell key={i}><span>{m}</span></VerticalCell>)}
          <RowBand $y={250} />
          <RowBand $y={368} />
          <RowBand $y={482} />
        </VerticalRuler>
        <Page>
          <TableArea>
            <MarginGuides><MoveHandle><MoveIcon /></MoveHandle></MarginGuides>
            <FormTable>
              <tbody>
                {fields.map((f) => (
                  <tr key={f}>
                    <td><CellLine><Selected>{f}</Selected><Colon>：</Colon><ReturnMark /></CellLine></td>
                  </tr>
                ))}
              </tbody>
            </FormTable>
            <RowEnds>{fields.map((f) => <ReturnMark key={f} />)}</RowEnds>
            <CellArrow width="96" height="18" viewBox="0 0 96 18">
              <path d="M1 10L16 1v3l79-1L17 12.500V17z" fill="#fd3a3a" />
            </CellArrow>
          </TableArea>
          <AfterTable><ReturnMark /><ResizeHandle /></AfterTable>
        </Page>
      </Workspace>

      <Watermark>
        <WatermarkTop>
          经验啦
          <svg width="24" height="24" viewBox="0 0 24 24"><path d="M0 11l5-2 3 6L17 1h7v2h-5L9 23H6z" fill="#f80000" stroke="none" /></svg>
        </WatermarkTop>
        <WatermarkUrl>jingyanla.com</WatermarkUrl>
      </Watermark>
    </Shell>
  );
}
